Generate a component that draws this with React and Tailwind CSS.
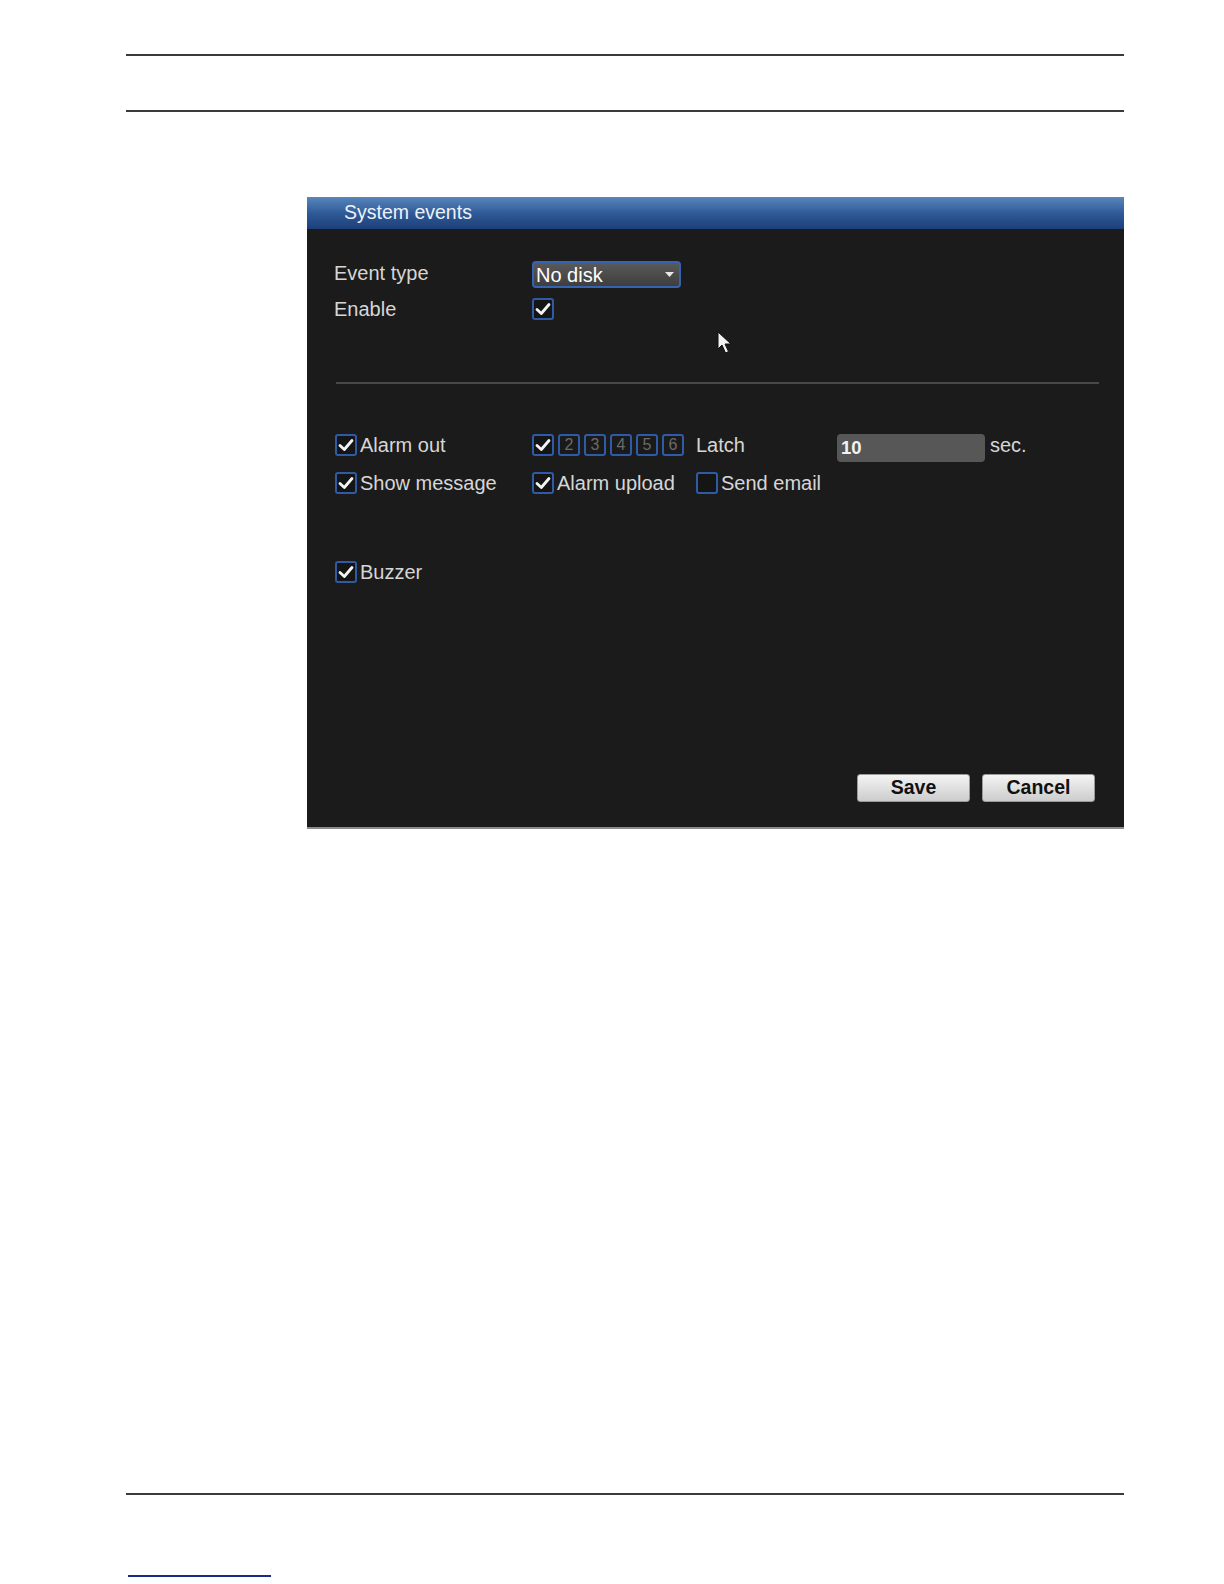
import React from "react";

const font = { fontFamily: '"Liberation Sans", Arial, sans-serif' };

function Check({ checked = true }) {
  return (
    <div className="w-[22px] h-[22px] shrink-0 rounded-[3px] border-2 border-[#2f5aa6] bg-[#151515] flex items-center justify-center">
      {checked && (
        <svg width="16" height="14" viewBox="0 0 16 14">
          <polyline points="2,7.5 6.3,11.5 14,2.5" fill="none" stroke="#f4f4f4" strokeWidth="2.8" strokeLinecap="round" strokeLinejoin="round" />
        </svg>
      )}
    </div>
  );
}

function Chan({ n }) {
  return (
    <div className="w-[22px] h-[22px] shrink-0 rounded-[3px] border-2 border-[#2f5aa6] bg-[#1a1a1a] flex items-center justify-center text-[16px] leading-none text-[#6a6a6a]">
      {n}
    </div>
  );
}

function CheckLabel({ label, checked = true, className = "" }) {
  return (
    <div className={"flex items-center gap-[3px] " + className}>
      <Check checked={checked} />
      <span className="text-[20px] leading-none text-[#d6d6d6] whitespace-nowrap">{label}</span>
    </div>
  );
}

export default function App() {
  return (
    <div className="w-[1224px] h-[1584px] bg-white flex flex-col pt-[54px]" style={font}>
      <div className="ml-[126px] w-[998px] h-[2px] bg-[#3a3a3a]" />
      <div className="ml-[126px] w-[998px] h-[2px] bg-[#3a3a3a] mt-[54px]" />

      <div className="relative mt-[85px] ml-[307px] w-[817px] h-[632px] bg-[#1c1b1b] border-b-2 border-[#8c8c8c] flex flex-col">
        <div className="h-[32px] shrink-0 bg-gradient-to-b from-[#5a86bd] via-[#2f5b98] to-[#1d3f78] flex items-center pl-[37px]">
          <span className="text-[19.5px] leading-none text-[#eef2f8]">System events</span>
        </div>

        <div className="pl-[27px] flex flex-col">
          <div className="mt-[32px] h-[27px] flex items-center">
            <div className="w-[198px] -mt-[4px] text-[20px] leading-none text-[#d6d6d6]">Event type</div>
            <div className="w-[149px] h-[27px] rounded-[4px] border-2 border-[#3563b4] bg-gradient-to-b from-[#5a5a5a] to-[#3e3e3e] flex items-center justify-between pl-[2px] pr-[5px]">
              <span className="text-[20px] leading-none text-white">No disk</span>
              <svg width="9" height="6" viewBox="0 0 9 6">
                <polygon points="0,0 9,0 4.5,5" fill="#e8e8e8" />
              </svg>
            </div>
          </div>

          <div className="mt-[10px] h-[22px] flex items-center">
            <div className="w-[198px] text-[20px] leading-none text-[#d6d6d6]">Enable</div>
            <Check />
          </div>

          <div className="mt-[62px] ml-[2px] w-[763px] h-[2px] bg-[#484848]" />

          <div className="mt-[47px] h-[28px] flex items-center">
            <CheckLabel label="Alarm out" className="w-[198px] ml-[1px]" />
            <div className="-ml-[1px] flex items-center gap-[4px]">
              <Check />
              <Chan n="2" />
              <Chan n="3" />
              <Chan n="4" />
              <Chan n="5" />
              <Chan n="6" />
            </div>
            <div className="ml-[12px] w-[141px] text-[20px] leading-none text-[#d6d6d6]">Latch</div>
            <div className="mt-[6px] w-[148px] h-[28px] rounded-[4px] bg-[#575757] flex items-center pl-[4px]">
              <span className="text-[18.5px] leading-none font-bold text-[#f2f2f2]">10</span>
            </div>
            <span className="ml-[5px] text-[20px] leading-none text-[#d6d6d6]">sec.</span>
          </div>

          <div className="mt-[10px] h-[28px] flex items-center">
            <CheckLabel label="Show message" className="w-[198px] ml-[1px]" />
            <CheckLabel label="Alarm upload" className="w-[164px] -ml-[1px]" />
            <CheckLabel label="Send email" checked={false} />
          </div>

          <div className="mt-[61px] h-[28px] flex items-center">
            <CheckLabel label="Buzzer" className="ml-[1px]" />
          </div>
        </div>

        <div className="mt-[188px] h-[28px] flex justify-end gap-[12px] pr-[29px]">
          <div className="w-[113px] h-[28px] rounded-[3px] border border-[#9a9a9a] bg-gradient-to-b from-[#f4f4f4] to-[#cdcdcd] flex items-center justify-center">
            <span className="text-[19.5px] leading-none font-bold text-[#111]">Save</span>
          </div>
          <div className="w-[113px] h-[28px] rounded-[3px] border border-[#9a9a9a] bg-gradient-to-b from-[#f4f4f4] to-[#cdcdcd] flex items-center justify-center">
            <span className="text-[19.5px] leading-none font-bold text-[#111]">Cancel</span>
          </div>
        </div>

        <svg className="absolute left-[410px] top-[134px]" width="17" height="25" viewBox="0 0 17 25">
          <path d="M1,1 L1,18 L5,14 L8.5,22 L11.5,20.5 L8,13 L14,13 Z" fill="#f2f2f2" stroke="#111" strokeWidth="1" strokeLinejoin="round" />
        </svg>
      </div>

      <div className="ml-[126px] w-[998px] h-[2px] bg-[#3a3a3a] mt-[664px]" />
      <div className="ml-[128px] w-[143px] h-[2px] bg-[#1a2a8a] mt-[80px]" />
    </div>
  );
}
